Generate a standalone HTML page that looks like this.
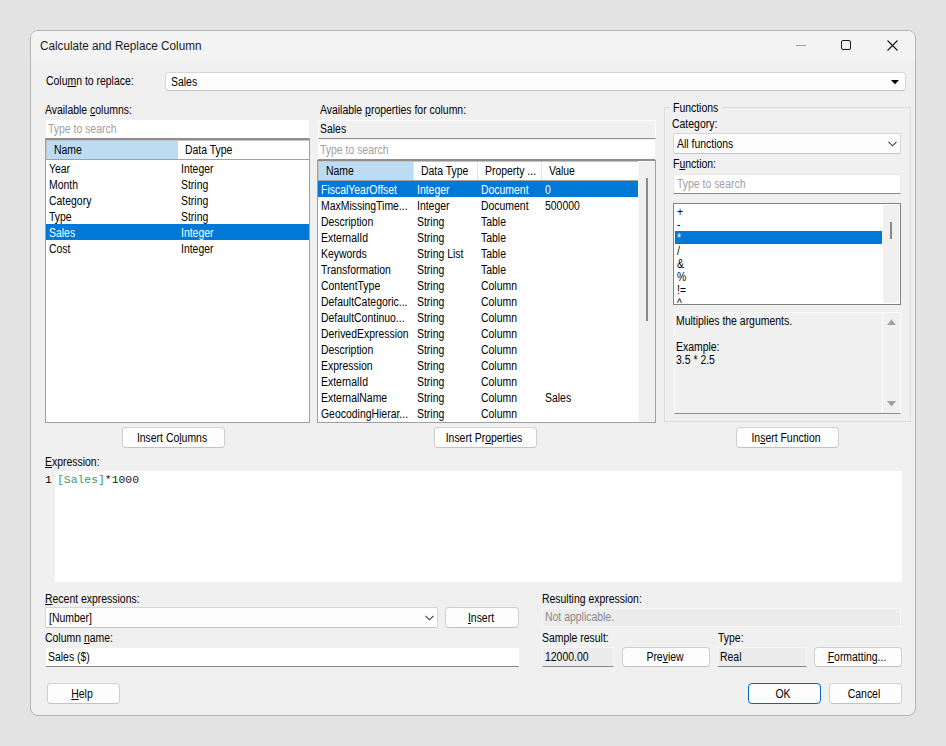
<!DOCTYPE html><html><head><meta charset="utf-8"><style>
*{margin:0;padding:0;box-sizing:border-box}
html,body{width:946px;height:746px;overflow:hidden;background:#e3e3e3;font-family:"Liberation Sans",sans-serif;color:#000}
.r{position:absolute}
.t{position:absolute;white-space:nowrap;font-size:12px;line-height:16px;transform:scaleX(0.87);transform-origin:0 0}
.tc{position:absolute;white-space:nowrap;font-size:12px;line-height:16px;width:200px;text-align:center;transform:scaleX(0.87);transform-origin:100px 0}
u{text-decoration:underline;text-underline-offset:1px}
.btn{position:absolute;background:#fdfdfd;border:1px solid #d0d0d0;border-bottom-color:#c2c2c2;border-radius:4px}
.mono{position:absolute;white-space:nowrap;font-family:"Liberation Mono",monospace;font-size:11.25px;line-height:14px}
</style></head><body>
<div class="r" style="left:30px;top:30px;width:886px;height:686px;background:#f0f0f0;border:1px solid #b4b4b4;border-radius:8px;overflow:hidden"></div>
<div class="r" style="left:31px;top:31px;width:884px;height:30px;background:#f3f3f3;border-radius:7px 7px 0 0"></div>
<div class="t" style="left:40px;top:38px;color:#1a1a1a;transform:scaleX(0.976);">Calculate and Replace Column</div>
<div class="r" style="left:796px;top:45px;width:10px;height:1px;background:#a0a0a0"></div>
<div class="r" style="left:841px;top:40px;width:10px;height:10px;border:1px solid #1a1a1a;border-radius:2px"></div>
<svg class="r" style="left:887px;top:40px" width="11" height="11" viewBox="0 0 11 11"><path d="M0.5 0.5L10.5 10.5M10.5 0.5L0.5 10.5" stroke="#1a1a1a" stroke-width="1.1"/></svg>
<div class="t" style="left:46px;top:73px;">Colu<u>m</u>n to replace:</div>
<div class="r" style="left:165px;top:72px;width:741px;height:19px;background:#fdfdfd;border:1px solid #d6d6d6;border-bottom-color:#c4c4c4;border-radius:4px"></div>
<div class="t" style="left:171px;top:74px;">Sales</div>
<svg class="r" style="left:891px;top:80px" width="8" height="5" viewBox="0 0 8 5"><path d="M0 0H8L4 4.2Z" fill="#000"/></svg>
<div class="t" style="left:45px;top:102px;">Available <u>c</u>olumns:</div>
<div class="r" style="left:46px;top:120px;width:263px;height:18px;background:#fff"></div>
<div class="t" style="left:48px;top:121px;color:#a0a0a0;">Type to search</div>
<div class="r" style="left:45px;top:138px;width:265px;height:285px;background:#fff;border:1px solid #a0a0a0;border-top:2px solid #8e8e8e"></div>
<div class="r" style="left:46px;top:140px;width:263px;height:1px;background:#c4c4c4"></div>
<div class="r" style="left:46px;top:141px;width:1px;height:18px;background:#c4c4c4"></div>
<div class="r" style="left:47px;top:141px;width:131px;height:18px;background:#bcdcf4"></div>
<div class="r" style="left:46px;top:159px;width:263px;height:1px;background:#a0a0a0"></div>
<div class="t" style="left:54px;top:142px;">Name</div>
<div class="t" style="left:185px;top:142px;">Data Type</div>
<div class="t" style="left:49px;top:161px;">Year</div>
<div class="t" style="left:181px;top:161px;">Integer</div>
<div class="t" style="left:49px;top:177px;">Month</div>
<div class="t" style="left:181px;top:177px;">String</div>
<div class="t" style="left:49px;top:193px;">Category</div>
<div class="t" style="left:181px;top:193px;">String</div>
<div class="t" style="left:49px;top:209px;">Type</div>
<div class="t" style="left:181px;top:209px;">String</div>
<div class="r" style="left:46px;top:224px;width:263px;height:16px;background:#0078d7"></div>
<div class="t" style="left:49px;top:225px;color:#fff;">Sales</div>
<div class="t" style="left:181px;top:225px;color:#fff;">Integer</div>
<div class="t" style="left:49px;top:241px;">Cost</div>
<div class="t" style="left:181px;top:241px;">Integer</div>
<div class="t" style="left:320px;top:102px;">Available <u>p</u>roperties for column:</div>
<div class="r" style="left:318px;top:120px;width:338px;height:19px;background:#f0f0f0;border:1px solid #fbfbfb;border-bottom:1px solid #8e8e8e"></div>
<div class="t" style="left:320px;top:121px;">Sales</div>
<div class="r" style="left:318px;top:140px;width:337px;height:20px;background:#fff;border-bottom:1px solid #8e8e8e"></div>
<div class="t" style="left:320px;top:142px;color:#a0a0a0;">Type to search</div>
<div class="r" style="left:317px;top:160px;width:339px;height:263px;background:#fff;border:1px solid #a0a0a0;border-top-color:#8e8e8e"></div>
<div class="r" style="left:318px;top:161px;width:320px;height:1px;background:#c4c4c4"></div>
<div class="r" style="left:318px;top:162px;width:1px;height:18px;background:#c4c4c4"></div>
<div class="r" style="left:319px;top:162px;width:95px;height:18px;background:#bcdcf4"></div>
<div class="r" style="left:318px;top:180px;width:320px;height:1px;background:#a0a0a0"></div>
<div class="r" style="left:413px;top:162px;width:1px;height:18px;background:#e5e5e5"></div>
<div class="r" style="left:477px;top:162px;width:1px;height:18px;background:#e5e5e5"></div>
<div class="r" style="left:541px;top:162px;width:1px;height:18px;background:#e5e5e5"></div>
<div class="t" style="left:326px;top:163px;">Name</div>
<div class="t" style="left:421px;top:163px;">Data Type</div>
<div class="t" style="left:485px;top:163px;">Property ...</div>
<div class="t" style="left:549px;top:163px;">Value</div>
<div class="r" style="left:638px;top:161px;width:17px;height:261px;background:#f0f0f0;border-left:1px solid #fafafa;border-top:1px solid #fafafa"></div>
<div class="r" style="left:646px;top:178px;width:2px;height:143px;background:#8a8a8a"></div>
<div class="r" style="left:318px;top:181px;width:320px;height:16px;background:#0078d7"></div>
<div class="t" style="left:321px;top:182px;color:#fff;">FiscalYearOffset</div>
<div class="t" style="left:417px;top:182px;color:#fff;">Integer</div>
<div class="t" style="left:481px;top:182px;color:#fff;">Document</div>
<div class="t" style="left:545px;top:182px;color:#fff;">0</div>
<div class="t" style="left:321px;top:198px;">MaxMissingTime...</div>
<div class="t" style="left:417px;top:198px;">Integer</div>
<div class="t" style="left:481px;top:198px;">Document</div>
<div class="t" style="left:545px;top:198px;">500000</div>
<div class="t" style="left:321px;top:214px;">Description</div>
<div class="t" style="left:417px;top:214px;">String</div>
<div class="t" style="left:481px;top:214px;">Table</div>
<div class="t" style="left:321px;top:230px;">ExternalId</div>
<div class="t" style="left:417px;top:230px;">String</div>
<div class="t" style="left:481px;top:230px;">Table</div>
<div class="t" style="left:321px;top:246px;">Keywords</div>
<div class="t" style="left:417px;top:246px;">String List</div>
<div class="t" style="left:481px;top:246px;">Table</div>
<div class="t" style="left:321px;top:262px;">Transformation</div>
<div class="t" style="left:417px;top:262px;">String</div>
<div class="t" style="left:481px;top:262px;">Table</div>
<div class="t" style="left:321px;top:278px;">ContentType</div>
<div class="t" style="left:417px;top:278px;">String</div>
<div class="t" style="left:481px;top:278px;">Column</div>
<div class="t" style="left:321px;top:294px;">DefaultCategoric...</div>
<div class="t" style="left:417px;top:294px;">String</div>
<div class="t" style="left:481px;top:294px;">Column</div>
<div class="t" style="left:321px;top:310px;">DefaultContinuo...</div>
<div class="t" style="left:417px;top:310px;">String</div>
<div class="t" style="left:481px;top:310px;">Column</div>
<div class="t" style="left:321px;top:326px;">DerivedExpression</div>
<div class="t" style="left:417px;top:326px;">String</div>
<div class="t" style="left:481px;top:326px;">Column</div>
<div class="t" style="left:321px;top:342px;">Description</div>
<div class="t" style="left:417px;top:342px;">String</div>
<div class="t" style="left:481px;top:342px;">Column</div>
<div class="t" style="left:321px;top:358px;">Expression</div>
<div class="t" style="left:417px;top:358px;">String</div>
<div class="t" style="left:481px;top:358px;">Column</div>
<div class="t" style="left:321px;top:374px;">ExternalId</div>
<div class="t" style="left:417px;top:374px;">String</div>
<div class="t" style="left:481px;top:374px;">Column</div>
<div class="t" style="left:321px;top:390px;">ExternalName</div>
<div class="t" style="left:417px;top:390px;">String</div>
<div class="t" style="left:481px;top:390px;">Column</div>
<div class="t" style="left:545px;top:390px;">Sales</div>
<div class="t" style="left:321px;top:406px;">GeocodingHierar...</div>
<div class="t" style="left:417px;top:406px;">String</div>
<div class="t" style="left:481px;top:406px;">Column</div>
<div class="r" style="left:664px;top:107px;width:247px;height:315px;border:1px solid #dcdcdc"></div>
<div class="r" style="left:670px;top:104px;width:52px;height:8px;background:#f0f0f0"></div>
<div class="t" style="left:673px;top:100px;">Functions</div>
<div class="t" style="left:672px;top:116px;">Cate<u>g</u>ory:</div>
<div class="r" style="left:673px;top:133px;width:228px;height:21px;background:#fdfdfd;border:1px solid #d6d6d6;border-bottom-color:#c4c4c4;border-radius:2px"></div>
<div class="t" style="left:677px;top:136px;">All functions</div>
<svg class="r" style="left:888px;top:141px" width="9" height="6" viewBox="0 0 9 6"><path d="M0.5 0.8L4.5 4.8L8.5 0.8" stroke="#404040" fill="none" stroke-width="1.15"/></svg>
<div class="t" style="left:673px;top:156px;">F<u>u</u>nction:</div>
<div class="r" style="left:673px;top:174px;width:228px;height:20px;background:#fff;border:1px solid #e9e9e9;border-bottom:1px solid #8a8a8a"></div>
<div class="t" style="left:677px;top:176px;color:#a0a0a0;">Type to search</div>
<div class="r" style="left:673px;top:203px;width:228px;height:102px;background:#fff;border:1px solid #828282"></div>
<div class="r" style="left:883px;top:205px;width:16px;height:98px;background:#f0f0f0"></div>
<div class="r" style="left:890px;top:222px;width:2px;height:17px;background:#8a8a8a"></div>
<div class="t" style="left:677px;top:204px;">+</div>
<div class="t" style="left:677px;top:217px;">-</div>
<div class="r" style="left:675px;top:231px;width:207px;height:13px;background:#0078d7"></div>
<div class="t" style="left:677px;top:230px;color:#fff;">*</div>
<div class="t" style="left:677px;top:243px;">/</div>
<div class="t" style="left:677px;top:256px;">&amp;</div>
<div class="t" style="left:677px;top:269px;">%</div>
<div class="t" style="left:677px;top:282px;">!=</div>
<div class="t" style="left:677px;top:295px;">^</div>
<div class="r" style="left:674px;top:303px;width:226px;height:1px;background:#fff"></div>
<div class="r" style="left:674px;top:312px;width:227px;height:102px;background:#f0f0f0;border:1px solid #fbfbfb;border-bottom:1px solid #8e8e8e"></div>
<div class="t" style="left:676px;top:313px;">Multiplies the arguments.</div>
<div class="t" style="left:676px;top:339px;">Example:</div>
<div class="t" style="left:676px;top:352px;">3.5 * 2.5</div>
<div class="r" style="left:882px;top:313px;width:1px;height:100px;background:#fbfbfb"></div>
<svg class="r" style="left:887px;top:319px" width="9" height="6" viewBox="0 0 9 6"><path d="M0 6H9L4.5 0.5Z" fill="#a0a0a0"/></svg>
<svg class="r" style="left:887px;top:401px" width="9" height="6" viewBox="0 0 9 6"><path d="M0 0H9L4.5 5.5Z" fill="#a0a0a0"/></svg>
<div class="btn" style="left:122px;top:427px;width:103px;height:21px;"></div>
<div class="tc" style="left:72.0px;top:429.5px;">Insert Co<u>l</u>umns</div>
<div class="btn" style="left:434px;top:427px;width:103px;height:21px;"></div>
<div class="tc" style="left:384.0px;top:429.5px;">Insert Pr<u>o</u>perties</div>
<div class="btn" style="left:736px;top:427px;width:103px;height:21px;"></div>
<div class="tc" style="left:686.0px;top:429.5px;">In<u>s</u>ert Function</div>
<div class="t" style="left:45px;top:454px;"><u>E</u>xpression:</div>
<div class="r" style="left:55px;top:471px;width:847px;height:111px;background:#fff"></div>
<div class="mono" style="left:45px;top:473px;color:#000">1</div>
<div class="mono" style="left:57px;top:473px;font-size:11.4px"><span style="color:#3a9a7a">[Sales]</span><span style="color:#222">*1000</span></div>
<div class="t" style="left:45px;top:591px;"><u>R</u>ecent expressions:</div>
<div class="r" style="left:45px;top:607px;width:393px;height:21px;background:#fdfdfd;border:1px solid #d6d6d6;border-bottom-color:#c4c4c4;border-radius:2px"></div>
<div class="t" style="left:49px;top:610px;">[Number]</div>
<svg class="r" style="left:425px;top:615px" width="9" height="6" viewBox="0 0 9 6"><path d="M0.5 0.8L4.5 4.8L8.5 0.8" stroke="#404040" fill="none" stroke-width="1.15"/></svg>
<div class="btn" style="left:445px;top:607px;width:74px;height:21px;"></div>
<div class="tc" style="left:380.5px;top:609.5px;"><u>I</u>nsert</div>
<div class="t" style="left:45px;top:630px;">Column <u>n</u>ame:</div>
<div class="r" style="left:46px;top:648px;width:473px;height:19px;background:#fff;border-bottom:1px solid #8a8a8a"></div>
<div class="t" style="left:48px;top:649px;">Sales ($)</div>
<div class="btn" style="left:47px;top:683px;width:73px;height:21px;"></div>
<div class="tc" style="left:-18.0px;top:685.5px;"><u>H</u>elp</div>
<div class="t" style="left:542px;top:591px;">Resulting expression:</div>
<div class="r" style="left:542px;top:608px;width:359px;height:19px;background:#ececec;border:1px solid #f8f8f8"></div>
<div class="t" style="left:545px;top:609px;color:#8a8a8a;">Not applicable.</div>
<div class="t" style="left:542px;top:630px;">Sample result:</div>
<div class="r" style="left:542px;top:647px;width:72px;height:20px;background:#ececec;border:1px solid #f8f8f8;border-bottom:1px solid #8a8a8a"></div>
<div class="t" style="left:545px;top:649px;">12000.00</div>
<div class="btn" style="left:622px;top:647px;width:88px;height:20px;"></div>
<div class="tc" style="left:564.5px;top:648.5px;">Pre<u>v</u>iew</div>
<div class="t" style="left:718px;top:630px;">Type:</div>
<div class="r" style="left:717px;top:647px;width:90px;height:20px;background:#ececec;border:1px solid #f8f8f8;border-bottom:1px solid #8a8a8a"></div>
<div class="t" style="left:720px;top:649px;">Real</div>
<div class="btn" style="left:814px;top:647px;width:88px;height:20px;"></div>
<div class="tc" style="left:756.5px;top:648.5px;"><u>F</u>ormatting...</div>
<div class="btn" style="left:748px;top:683px;width:73px;height:21px;border:1.5px solid #0067c0"></div>
<div class="tc" style="left:683.0px;top:685.5px;">OK</div>
<div class="btn" style="left:829px;top:683px;width:73px;height:21px;"></div>
<div class="tc" style="left:764.0px;top:685.5px;">Cancel</div>
</body></html>
